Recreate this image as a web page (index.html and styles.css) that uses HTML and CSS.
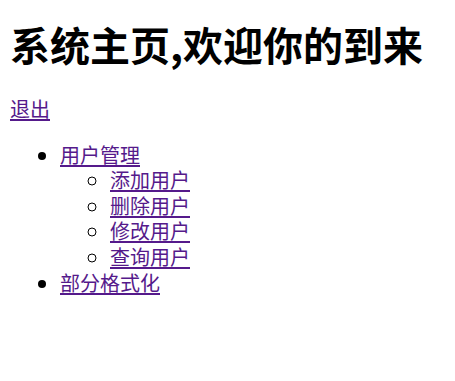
FILE: index.html
```html
<!DOCTYPE html>
<html lang="zh">
<head>
<meta charset="utf-8">
<title>系统主页</title>
<link rel="stylesheet" href="styles.css">
</head>
<body>
<h1 class="title">系统主页,欢迎你的到来</h1>
<div class="logout"><a class="link" href="#">退出</a></div>
<ul class="menu">
  <li><a class="link" href="#">用户管理</a>
    <ul class="submenu">
      <li><a class="link" href="#">添加用户</a></li>
      <li><a class="link" href="#">删除用户</a></li>
      <li><a class="link" href="#">修改用户</a></li>
      <li><a class="link" href="#">查询用户</a></li>
    </ul>
  </li>
  <li><a class="link" href="#">部分格式化</a></li>
</ul>
</body>
</html>
```
FILE: styles.css
```css
body {
  margin: 10px;
  font-family: "Noto Sans CJK SC", "Noto Sans", sans-serif;
  font-size: 20px;
  line-height: 25.6px;
  color: #000;
  background: #fff;
}
.title {
  font-size: 40px;
  font-weight: bold;
  line-height: 42px;
  margin: 13px 0 31px;
}
.logout {
  margin: 0;
}
.link {
  color: #551a8b;
  text-decoration: underline;
  text-decoration-thickness: 2px;
  text-underline-offset: 2px;
}
.menu {
  margin: 20px 0;
  padding-left: 50px;
  list-style: disc;
}
.submenu {
  margin: 0;
  padding-left: 50px;
  list-style: circle;
}
```
